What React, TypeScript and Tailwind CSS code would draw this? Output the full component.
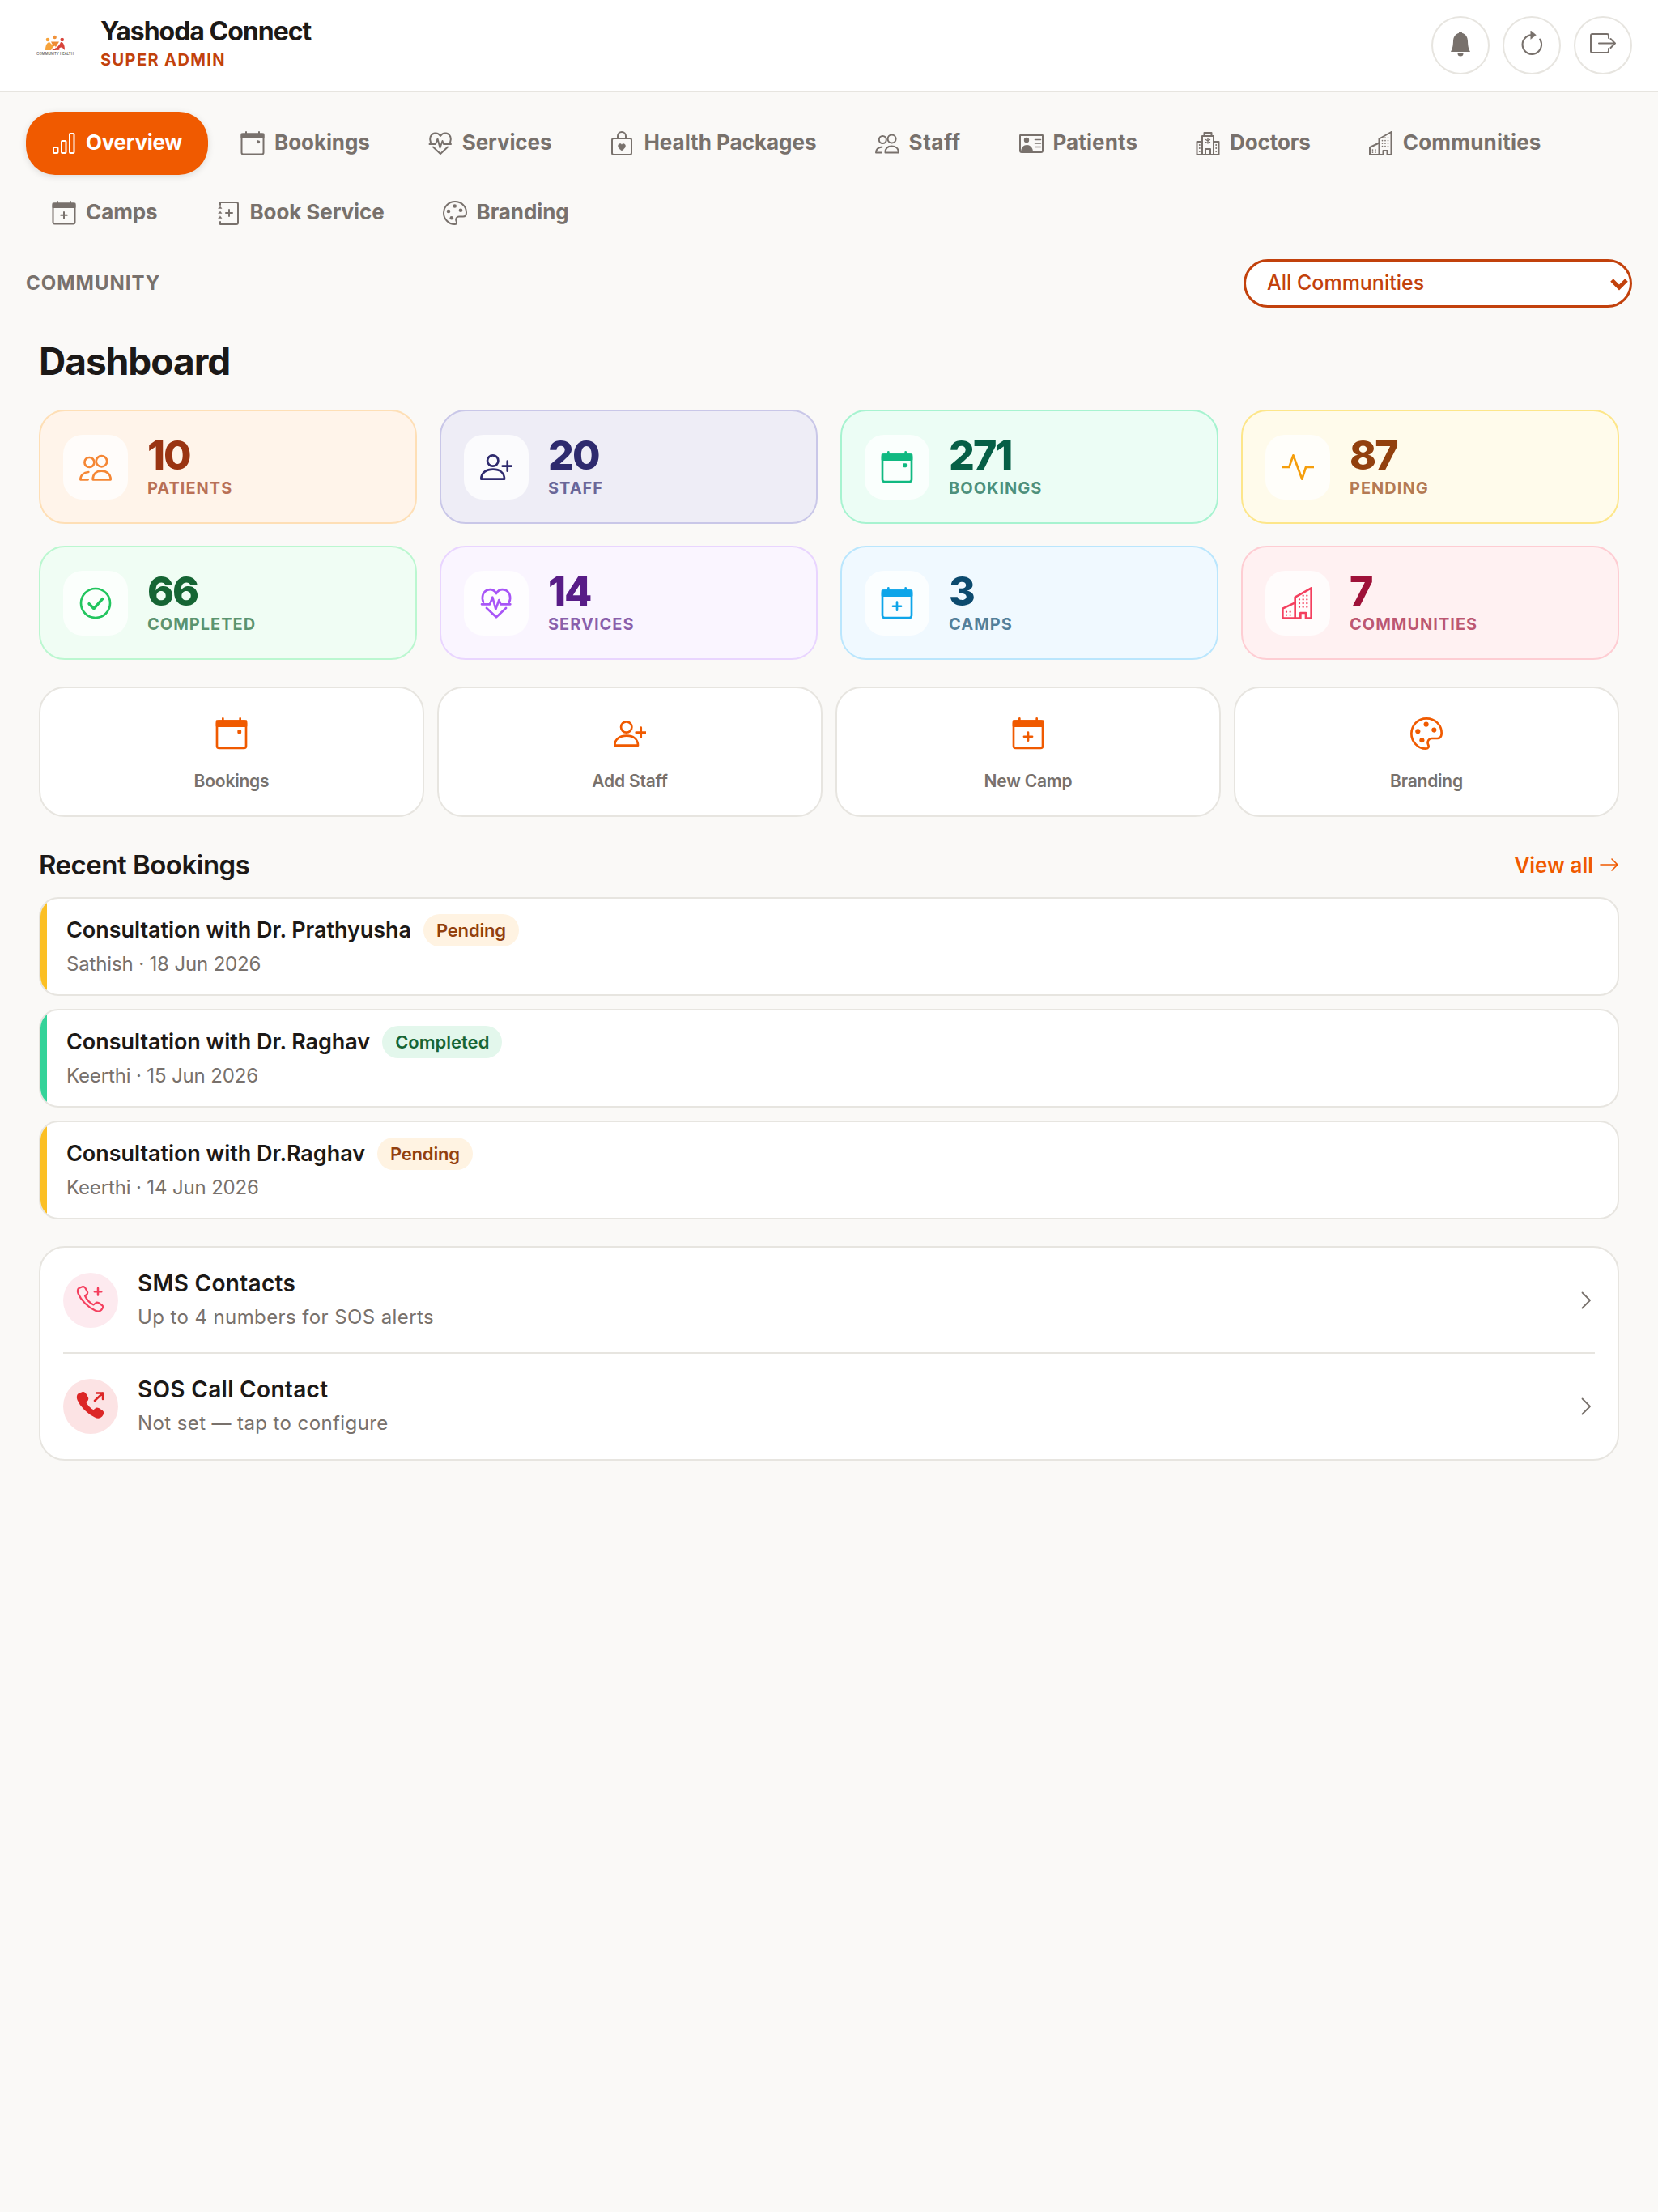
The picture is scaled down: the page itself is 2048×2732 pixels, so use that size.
import type { ReactNode } from "react";

type IconProps = { className?: string };

const base = {
  viewBox: "0 0 30 30",
  fill: "none",
  stroke: "currentColor",
  strokeWidth: 2,
  strokeLinecap: "round" as const,
  strokeLinejoin: "round" as const,
};

const CalendarFrame = ({ children, className }: IconProps & { children: ReactNode }) => (
  <svg {...base} className={className}>
    <rect x="1.5" y="3.5" width="27" height="25" rx="2" />
    <path d="M1.5 3.5h27v4.5h-27z" fill="currentColor" />
    <path d="M7 1v3M23 1v3" />
    {children}
  </svg>
);

const CalendarIcon = ({ className }: IconProps) => (
  <CalendarFrame className={className}>
    <rect x="21" y="12" width="2.6" height="2.6" rx="0.5" fill="currentColor" strokeWidth="1" />
  </CalendarFrame>
);

const CalendarPlusIcon = ({ className }: IconProps) => (
  <CalendarFrame className={className}>
    <path d="M15 14v7.5M11.2 17.8h7.6" />
  </CalendarFrame>
);

const ChartIcon = ({ className }: IconProps) => (
  <svg {...base} className={className}>
    <rect x="2" y="20" width="5.5" height="7" rx="1" />
    <rect x="12" y="12" width="5.5" height="15" rx="1" />
    <rect x="22" y="3" width="5.5" height="24" rx="1" />
  </svg>
);

const HeartPulseIcon = ({ className }: IconProps) => (
  <svg {...base} className={className}>
    <path d="M3 14C1 9.500 2.500 3.500 8 2.500 11 2 13.500 3.500 15 6 16.500 3.500 19 2 22 2.500 27.500 3.500 29 9.500 27 14" />
    <path d="M1.500 16H9l2.500-6.500 3 11 3-8.500 1.500 4h9" />
    <path d="M6 19.500 15 28l9-8.500" />
  </svg>
);

const BagIcon = ({ className }: IconProps) => (
  <svg {...base} className={className}>
    <rect x="3" y="9" width="24" height="20" rx="2" />
    <path d="M10 9V6a5 5 0 0 1 10 0v3" />
    <path
      d="M15 24c-3-2.200-4.500-3.800-4.500-5.800 0-1.600 1.200-2.700 2.500-2.700 1 0 1.600.5 2 1.200.4-.7 1-1.200 2-1.200 1.300 0 2.500 1.100 2.500 2.700 0 2-1.500 3.600-4.500 5.800z"
      fill="currentColor"
      strokeWidth="0.5"
    />
  </svg>
);

const UsersIcon = ({ className }: IconProps) => (
  <svg {...base} className={className}>
    <circle cx="9.300" cy="10.500" r="4.500" />
    <circle cx="20.600" cy="9.500" r="5" />
    <path d="M12.500 26.500c0-5.500 3.500-8 8-8s8.500 2.500 8.500 8z" />
    <path d="M8.500 19.500C4 20 1 22.500 1 26.500h7" />
  </svg>
);

const IdCardIcon = ({ className }: IconProps) => (
  <svg {...base} className={className}>
    <rect x="1" y="4" width="28" height="22" rx="2" />
    <path d="M1 5.500h28" strokeWidth="1" />
    <circle cx="9" cy="11" r="3.200" fill="currentColor" stroke="none" />
    <path d="M2 26c0-6 3.500-9 7.500-9s7.500 3 7.500 9z" fill="currentColor" stroke="none" />
    <path d="M19.500 10.500h7M19.500 15h7M19.500 19.500h7" strokeWidth="1.600" />
  </svg>
);

const HospitalIcon = ({ className }: IconProps) => (
  <svg {...base} className={className}>
    <path d="M8 29V6h14v23" />
    <path d="M10.500 6V2h9v4" />
    <path d="M8 13H1.500v16h27V13H22" />
    <path d="M12 29v-7h6v7" />
    <path d="M15 9v6M12.500 10.500l5 3M17.500 10.500l-5 3" strokeWidth="1.400" />
    <path d="M4.800 17v.1M4.800 21v.1M4.800 25v.1M25.200 17v.1M25.200 21v.1M25.200 25v.1" />
  </svg>
);

const BuildingsIcon = ({ className }: IconProps) => (
  <svg {...base} className={className}>
    <path d="M12.500 29V9.500L27.500 1v28h-5v-5h-5v5z" />
    <path d="M12.500 14.500 1 20v9h11.500" />
    <path
      d="M16.500 11.500v.1M20 11.500v.1M23.500 11.500v.1M16.500 15v.1M20 15v.1M23.500 15v.1M16.500 18.500v.1M20 18.500v.1M23.500 18.500v.1M20 8v.1M23.500 8v.1M4.500 23v.1M8 23v.1M4.500 26v.1M8 26v.1"
      strokeWidth="1.700"
    />
  </svg>
);

const PaletteIcon = ({ className }: IconProps) => (
  <svg {...base} className={className}>
    <path d="M15 1C7 1 1 7.500 1 15c0 7.500 6 14 13.500 14 2.500 0 3-2 2-4-1-2.500.5-5.500 3.500-5.500h5c3 0 4-2.500 4-5C29 7 23 1 15 1z" />
    <circle cx="14.700" cy="6.500" r="2.300" fill="currentColor" stroke="none" />
    <circle cx="7" cy="13" r="2.300" fill="currentColor" stroke="none" />
    <circle cx="22" cy="11.700" r="2.300" fill="currentColor" stroke="none" />
    <circle cx="10.800" cy="21.200" r="2.300" fill="currentColor" stroke="none" />
  </svg>
);

const NotebookIcon = ({ className }: IconProps) => (
  <svg {...base} className={className}>
    <path d="M5 2h20a2 2 0 0 1 2 2v23a2 2 0 0 1-2 2H5M5 2v3M5 26v3" />
    <path d="M16 11v8M12 15h8" />
    <path d="M3 9.500h4L5 7zM3 15.500h4L5 13zM3 21.500h4L5 19z" fill="currentColor" strokeWidth="0.5" />
  </svg>
);

const UserPlusIcon = ({ className }: IconProps) => (
  <svg {...base} className={className}>
    <circle cx="11.800" cy="9" r="5" />
    <path d="M1 26c0-6 5-9 11-9s10.500 3 10.500 9z" />
    <path d="M25.300 9.500v9M20.800 14h9" />
  </svg>
);

const CheckCircleIcon = ({ className }: IconProps) => (
  <svg {...base} className={className}>
    <circle cx="15" cy="15" r="13.500" />
    <path d="M9 15.500l4.500 4.500 8-9" strokeWidth="2.600" />
  </svg>
);

const PulseIcon = ({ className }: IconProps) => (
  <svg {...base} strokeLinecap="butt" className={className}>
    <path d="M0 15h7L10.800 4 19 26l3.500-11H30" />
  </svg>
);

const BellIcon = ({ className }: IconProps) => (
  <svg viewBox="0 0 32 32" fill="currentColor" className={className}>
    <path d="M16 0c-1.200 0-2 .8-2.200 1.900C9 3.200 7.200 7 7 12c-.2 6-.9 9-3 13h24c-2.100-4-2.800-7-3-13-.2-5-2-8.800-6.800-10.100C18 .8 17.200 0 16 0z" />
    <path d="M12.500 27h7a3.500 3.500 0 0 1-7 0z" />
  </svg>
);

const RefreshIcon = ({ className }: IconProps) => (
  <svg {...base} className={className}>
    <path d="M15 5A11 11 0 1 0 24.500 10" />
    <path d="M14 0l6 5-6 4.500z" fill="currentColor" strokeWidth="0.5" />
  </svg>
);

const LogoutIcon = ({ className }: IconProps) => (
  <svg viewBox="0 0 32 32" fill="none" stroke="currentColor" strokeWidth="2" strokeLinecap="round" strokeLinejoin="round" className={className}>
    <path d="M23 9V6a2 2 0 0 0-2-2H3a2 2 0 0 0-2 2v19a2 2 0 0 0 2 2h18a2 2 0 0 0 2-2v-3" />
    <path d="M11 15.500h20M25.500 10l5.500 5.500-5.500 5.500" />
  </svg>
);

const ArrowIcon = ({ className }: IconProps) => (
  <svg viewBox="0 0 24 24" fill="none" stroke="currentColor" strokeWidth="1.600" strokeLinecap="round" strokeLinejoin="round" className={className}>
    <path d="M1 12h21M15 5l7 7-7 7" />
  </svg>
);

const ChevronIcon = ({ className }: IconProps) => (
  <svg viewBox="0 0 14 24" fill="none" stroke="currentColor" strokeWidth="1.800" strokeLinecap="round" strokeLinejoin="round" className={className}>
    <path d="M2.500 2.500 12 12l-9.500 9.500" />
  </svg>
);

const handset =
  "M7 1.500C9 .5 10.500 1.500 11.500 3L14 7.500c.5 1.500 0 2.500-1 3.500l-2 1.500c2 4.500 6.500 9 10.500 11l2.500-2c1-1 2.500-1 3.500-.5l4.500 3c1.500 1 1.500 3 .5 4L31 30c-1.500 1.500-4.500 2-7.500.5C15 26.500 6 18 2.500 9.500 1.500 6.500 2 4 3.500 3z";

const PhonePlusIcon = ({ className }: IconProps) => (
  <svg viewBox="0 0 36 36" fill="none" stroke="currentColor" strokeWidth="2.200" strokeLinecap="round" strokeLinejoin="round" className={className}>
    <path d={handset} />
    <path d="M27 3v8.500M22.800 7.200h8.500" strokeWidth="2.500" />
  </svg>
);

const PhoneOutIcon = ({ className }: IconProps) => (
  <svg viewBox="0 0 36 36" fill="none" stroke="currentColor" strokeWidth="2.200" strokeLinecap="round" strokeLinejoin="round" className={className}>
    <path d={handset} fill="currentColor" />
    <path d="M23 11 33 1.500M25 1.500h8V9" strokeWidth="2.500" />
  </svg>
);

const navItems = [
  { label: "Overview", icon: ChartIcon, active: true, track: "tracking-[-0.3px]" },
  { label: "Bookings", icon: CalendarIcon, track: "tracking-[-0.1px]" },
  { label: "Services", icon: HeartPulseIcon, track: "tracking-[-0.1px]" },
  { label: "Health Packages", icon: BagIcon, track: "tracking-[0px]" },
  { label: "Staff", icon: UsersIcon, track: "tracking-[0.5px]" },
  { label: "Patients", icon: IdCardIcon, track: "tracking-[0.1px]" },
  { label: "Doctors", icon: HospitalIcon, track: "tracking-[-0.1px]" },
  { label: "Communities", icon: BuildingsIcon, track: "tracking-[0.2px]" },
  { label: "Camps", icon: CalendarPlusIcon, track: "tracking-[-0.1px]" },
  { label: "Book Service", icon: NotebookIcon, track: "tracking-[-0.1px]" },
  { label: "Branding", icon: PaletteIcon, track: "tracking-[-0.1px]" },
];

const stats = [
  { value: "10", label: "PATIENTS", icon: UsersIcon, card: "bg-[#fff4ea] border-[#fedfb6]", num: "text-[#9a3412]", sub: "text-[#9a3412]/70", ic: "text-[#f58634]" },
  { value: "20", label: "STAFF", icon: UserPlusIcon, card: "bg-[#eeedf6] border-[#c9c7e8]", num: "text-[#2e2a6e]", sub: "text-[#2e2a6e]/70", ic: "text-[#2e2a6e]" },
  { value: "271", label: "BOOKINGS", icon: CalendarIcon, card: "bg-[#ecfdf5] border-[#a7f3d0]", num: "text-[#065f46]", sub: "text-[#065f46]/70", ic: "text-[#10b981]" },
  { value: "87", label: "PENDING", icon: PulseIcon, card: "bg-[#fffbeb] border-[#fde68a]", num: "text-[#92400e]", sub: "text-[#92400e]/70", ic: "text-[#f59e0b]" },
  { value: "66", label: "COMPLETED", icon: CheckCircleIcon, card: "bg-[#f0fdf4] border-[#bbf7d0]", num: "text-[#166534]", sub: "text-[#166534]/70", ic: "text-[#22c55e]" },
  { value: "14", label: "SERVICES", icon: HeartPulseIcon, card: "bg-[#faf5ff] border-[#e9d5ff]", num: "text-[#581c87]", sub: "text-[#581c87]/70", ic: "text-[#a855f7]" },
  { value: "3", label: "CAMPS", icon: CalendarPlusIcon, card: "bg-[#f0f9ff] border-[#bae6fd]", num: "text-[#0c4a6e]", sub: "text-[#0c4a6e]/70", ic: "text-[#0ea5e9]" },
  { value: "7", label: "COMMUNITIES", icon: BuildingsIcon, card: "bg-[#fff1f2] border-[#fecdd3]", num: "text-[#9f1239]", sub: "text-[#9f1239]/70", ic: "text-[#f43f5e]" },
];

const quickActions = [
  { label: "Bookings", icon: CalendarIcon },
  { label: "Add Staff", icon: UserPlusIcon },
  { label: "New Camp", icon: CalendarPlusIcon },
  { label: "Branding", icon: PaletteIcon },
];

const bookings = [
  { title: "Consultation with Dr. Prathyusha", meta: "Sathish · 18 Jun 2026", status: "Pending" },
  { title: "Consultation with Dr. Raghav", meta: "Keerthi · 15 Jun 2026", status: "Completed" },
  { title: "Consultation with Dr.Raghav", meta: "Keerthi · 14 Jun 2026", status: "Pending" },
];

const Logo = () => (
  <div className="flex w-[72px] flex-col items-center">
    <svg viewBox="0 0 24 19" className="h-[19px] w-[24px]">
      <circle cx="3" cy="6" r="2.300" fill="#f6a33c" />
      <circle cx="11.700" cy="3" r="2.200" fill="#f0923a" />
      <circle cx="20.700" cy="6" r="2.300" fill="#d8433a" />
      <path d="M0 19C0 13 2 9.500 5 9l5 5-3 5z" fill="#f6a33c" />
      <path d="M7 8.500h10l-4 6.500-1.500-1.500-1.500 1z" fill="#ee8a34" />
      <path d="M8 19c5-2 9-5 11-10 3 0 5 3 5 10-3-4-5-4-6-3-3 3-7 4-10 3z" fill="#d8433a" />
      <path d="M12 15.500l6 3.500h-4z" fill="#e0604a" />
    </svg>
    <span className="mt-[2px] text-[4.300px] leading-[5px] font-medium whitespace-nowrap text-[#57534e]">COMMUNITY HEALTH</span>
  </div>
);

function NavLink({ label, icon: Icon, active, track }: { label: string; icon: (p: IconProps) => ReactNode; active?: boolean; track: string }) {
  return (
    <button
      className={
        active
          ? "flex h-[78px] items-center gap-3 rounded-[36px] bg-[#f05a00] px-8 text-[26px] font-bold text-white shadow-[0_2px_8px_rgba(0,0,0,0.12)]"
          : "flex h-[78px] items-center gap-3 rounded-[36px] px-8 text-[26px] font-bold text-[#78716c]"
      }
    >
      <Icon className="size-[30px]" />
      <span className={`-mt-[4px] ${track}`}>{label}</span>
    </button>
  );
}

export default function App() {
  return (
    <div className="min-h-[2732px] bg-[#faf9f7] font-['Inter',sans-serif] text-[#1c1917]">
      {/* Top bar */}
      <header className="flex h-[114px] items-center justify-between border-b-2 border-[#e7e5e0] bg-white px-8">
        <div className="flex items-center gap-5">
          <Logo />
          <div className="pb-[6px]">
            <div className="text-[32px] leading-[38px] font-bold tracking-[-1px]">Yashoda Connect</div>
            <div className="mt-[4px] text-[20px] leading-[24px] font-bold tracking-[1.4px] text-[#c2410c]">SUPER ADMIN</div>
          </div>
        </div>
        <div className="flex items-center gap-4 text-[#78716c]">
          <button className="flex size-[72px] items-center justify-center rounded-full border-2 border-[#e7e5e0]">
            <BellIcon className="mb-[3px] size-[32px]" />
          </button>
          <button className="flex size-[72px] items-center justify-center rounded-full border-2 border-[#e7e5e0]">
            <RefreshIcon className="mb-[4px] size-[32px]" />
          </button>
          <button className="flex size-[72px] items-center justify-center rounded-full border-2 border-[#e7e5e0]">
            <LogoutIcon className="mb-[4px] size-[32px]" />
          </button>
        </div>
      </header>

      {/* Tabs */}
      <nav className="flex flex-wrap gap-2 px-8 pt-6">
        {navItems.map((item) => (
          <NavLink key={item.label} {...item} />
        ))}
      </nav>

      {/* Community filter */}
      <div className="mt-[18px] flex items-center justify-between px-8">
        <span className="text-[24px] font-bold tracking-[1px] text-[#78716c]">COMMUNITY</span>
        <div className="relative w-[480px]">
          <select className="h-[60px] w-full appearance-none rounded-[30px] border-[3px] border-[#c2410c] bg-white pl-[26px] text-[25px] font-medium text-[#c2410c]">
            <option>All Communities</option>
          </select>
          <svg viewBox="0 0 24 24" fill="none" stroke="#c2410c" strokeWidth="5" className="absolute top-[18px] right-[4px] size-[24px]">
            <path d="M3 8l9 9 9-9" />
          </svg>
        </div>
      </div>

      <main className="px-12">
        <h1 className="mt-[38px] text-[46px] leading-[56px] font-bold tracking-[-1px]">Dashboard</h1>

        {/* Stats */}
        <div className="mt-[32px] grid grid-cols-4 gap-x-7 gap-y-[27px]">
          {stats.map((s) => (
            <div key={s.label} className={`flex h-[141px] items-center gap-6 rounded-[32px] border-2 px-7 ${s.card}`}>
              <div className="flex size-[80px] items-center justify-center rounded-[24px] bg-white/75">
                <s.icon className={`size-[40px] ${s.ic}`} />
              </div>
              <div className="pb-[5px]">
                <div className={`text-[50px] leading-[56px] font-extrabold tracking-[-2px] ${s.num}`}>{s.value}</div>
                <div className={`mt-[1px] text-[20px] leading-[24px] font-bold tracking-[1px] ${s.sub}`}>{s.label}</div>
              </div>
            </div>
          ))}
        </div>

        {/* Quick actions */}
        <div className="mt-[33px] grid grid-cols-4 gap-4">
          {quickActions.map((a) => (
            <button key={a.label} className="flex h-[161px] flex-col items-center rounded-[32px] border-2 border-[#e7e5e0] bg-white pt-[36px]">
              <a.icon className="size-[40px] text-[#f05a00]" />
              <span className="mt-[24px] text-[21px] leading-[30px] font-semibold tracking-[-0.2px] text-[#78716c]">{a.label}</span>
            </button>
          ))}
        </div>

        {/* Recent bookings */}
        <div className="mt-[39px] flex items-center justify-between">
          <h2 className="text-[33px] leading-[40px] font-semibold tracking-[-0.5px]">Recent Bookings</h2>
          <a className="flex items-center gap-2 text-[26px] font-semibold text-[#f05a00]">
            View all
            <ArrowIcon className="size-[24px]" />
          </a>
        </div>

        <div className="mt-[20px] flex flex-col gap-4">
          {bookings.map((b) => (
            <div key={b.title + b.meta} className="flex h-[122px] overflow-hidden rounded-[24px] border-2 border-[#e7e5e0] bg-white">
              <div className={b.status === "Pending" ? "w-2 shrink-0 bg-[#fbbf24]" : "w-2 shrink-0 bg-[#34d399]"} />
              <div className="flex flex-col justify-center pl-[24px]">
                <div className="flex items-center gap-[15px]">
                  <span className="text-[27px] leading-[40px] font-semibold tracking-[-0.05px]">{b.title}</span>
                  <span
                    className={
                      b.status === "Pending"
                        ? "rounded-full bg-[#fff3e2] px-4 text-[22px] leading-[40px] font-semibold tracking-[-0.2px] text-[#92400e]"
                        : "rounded-full bg-[#e3f7ec] px-4 text-[22px] leading-[40px] font-semibold text-[#166534]"
                    }
                  >
                    {b.status}
                  </span>
                </div>
                <div className="mt-[4px] text-[24px] leading-[36px] tracking-[-0.15px] text-[#78716c]">{b.meta}</div>
              </div>
            </div>
          ))}
        </div>

        {/* SOS settings */}
        <div className="mt-[33px] rounded-[32px] border-2 border-[#e7e5e0] bg-white px-7">
          <div className="flex h-[131px] items-center border-b-2 border-[#e7e5e0]">
            <div className="flex size-[68px] items-center justify-center rounded-full bg-[#fdeaef] text-[#f43f5e]">
              <PhonePlusIcon className="size-[36px]" />
            </div>
            <div className="ml-6 flex-1 pb-[2px]">
              <div className="text-[28px] leading-[36px] font-semibold tracking-[0.3px]">SMS Contacts</div>
              <div className="mt-[8px] text-[24px] leading-[32px] tracking-[0.4px] text-[#78716c]">Up to 4 numbers for SOS alerts</div>
            </div>
            <ChevronIcon className="mr-[4px] h-[24px] w-[14px] text-[#78716c]" />
          </div>
          <div className="flex h-[130px] items-center">
            <div className="flex size-[68px] items-center justify-center rounded-full bg-[#fce3e4] text-[#dc2626]">
              <PhoneOutIcon className="size-[36px]" />
            </div>
            <div className="ml-6 flex-1 pb-[2px]">
              <div className="text-[28px] leading-[36px] font-semibold tracking-[0.3px]">SOS Call Contact</div>
              <div className="mt-[8px] text-[24px] leading-[32px] tracking-[0.4px] text-[#78716c]">Not set — tap to configure</div>
            </div>
            <ChevronIcon className="mr-[4px] h-[24px] w-[14px] text-[#78716c]" />
          </div>
        </div>
      </main>
    </div>
  );
}
